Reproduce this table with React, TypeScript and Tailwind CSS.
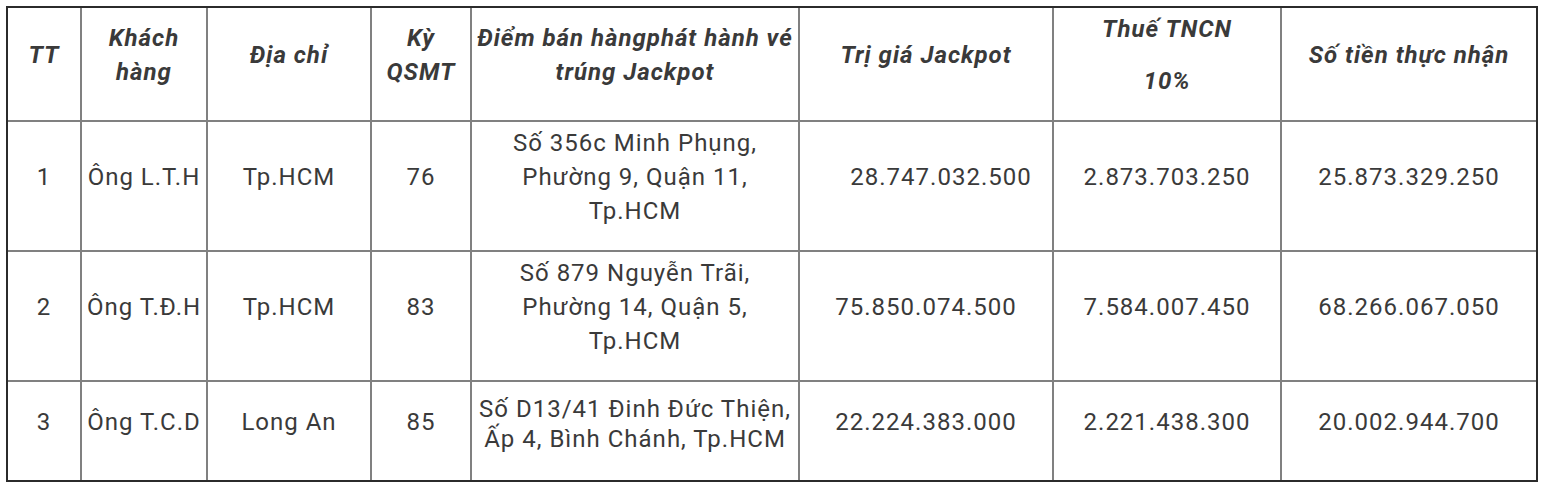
const COLS = [74, 126, 164, 100, 328, 254, 228, 254];

const ROWS = [
  {
    tt: '1',
    name: 'Ông L.T.H',
    city: 'Tp.HCM',
    ky: '76',
    place: ['Số 356c Minh Phụng,', 'Phường 9, Quận 11,', 'Tp.HCM'],
    jackpot: '28.747.032.500',
    tax: '2.873.703.250',
    net: '25.873.329.250',
    jackpotShift: true,
  },
  {
    tt: '2',
    name: 'Ông T.Đ.H',
    city: 'Tp.HCM',
    ky: '83',
    place: ['Số 879 Nguyễn Trãi,', 'Phường 14, Quận 5,', 'Tp.HCM'],
    jackpot: '75.850.074.500',
    tax: '7.584.007.450',
    net: '68.266.067.050',
    jackpotShift: false,
  },
  {
    tt: '3',
    name: 'Ông T.C.D',
    city: 'Long An',
    ky: '85',
    place: ['Số D13/41 Đinh Đức Thiện,', 'Ấp 4, Bình Chánh, Tp.HCM'],
    jackpot: '22.224.383.000',
    tax: '2.221.438.300',
    net: '20.002.944.700',
    jackpotShift: false,
  },
];

function Cell({
  children,
  last,
  bottom,
  head,
}: {
  children: React.ReactNode;
  last?: boolean;
  bottom?: boolean;
  head?: boolean;
}) {
  return (
    <td
      className={[
        'p-0 align-middle text-center border-[#808080]',
        last ? '' : 'border-r-2',
        bottom ? '' : 'border-b-2',
        head ? 'font-bold italic' : '',
      ].join(' ')}
    >
      <div className="pb-[18px] whitespace-nowrap">{children}</div>
    </td>
  );
}

export default function App() {
  return (
    <div className="bg-white w-[1546px] h-[490px] pt-[6px] pl-[6px]">
      <div className="inline-block border-2 border-[#2b2b2b]">
        <table
          className="table-fixed border-separate border-spacing-0 text-[24px] leading-[34px] tracking-[1px] text-[#3a3a3a]"
          style={{ fontFamily: 'Roboto, "Noto Sans", sans-serif', width: 1528 }}
        >
          <colgroup>
            {COLS.map((w, i) => (
              <col key={i} style={{ width: w }} />
            ))}
          </colgroup>
          <thead>
            <tr className="h-[114px]">
              <Cell head>TT</Cell>
              <Cell head>
                Khách
                <br />
                hàng
              </Cell>
              <Cell head>Địa chỉ</Cell>
              <Cell head>
                Kỳ
                <br />
                QSMT
              </Cell>
              <Cell head>
                Điểm bán hàngphát hành vé
                <br />
                trúng Jackpot
              </Cell>
              <Cell head>Trị giá Jackpot</Cell>
              <Cell head>
                <div className="flex flex-col gap-[18px]">
                  <span>Thuế TNCN</span>
                  <span>10%</span>
                </div>
              </Cell>
              <Cell head last>
                Số tiền thực nhận
              </Cell>
            </tr>
          </thead>
          <tbody>
            {ROWS.map((r, i) => {
              const bottom = i === ROWS.length - 1;
              return (
                <tr key={r.tt} className={bottom ? 'h-[98px]' : 'h-[130px]'}>
                  <Cell bottom={bottom}>{r.tt}</Cell>
                  <Cell bottom={bottom}>{r.name}</Cell>
                  <Cell bottom={bottom}>{r.city}</Cell>
                  <Cell bottom={bottom}>{r.ky}</Cell>
                  <Cell bottom={bottom}>
                    <div className={bottom ? 'leading-[30px] pt-[4px]' : ''}>
                      {r.place.map((l) => (
                        <div key={l}>{l}</div>
                      ))}
                    </div>
                  </Cell>
                  <Cell bottom={bottom}>
                    <span className={r.jackpotShift ? 'pl-[30px]' : ''}>{r.jackpot}</span>
                  </Cell>
                  <Cell bottom={bottom}>{r.tax}</Cell>
                  <Cell bottom={bottom} last>
                    {r.net}
                  </Cell>
                </tr>
              );
            })}
          </tbody>
        </table>
      </div>
    </div>
  );
}
